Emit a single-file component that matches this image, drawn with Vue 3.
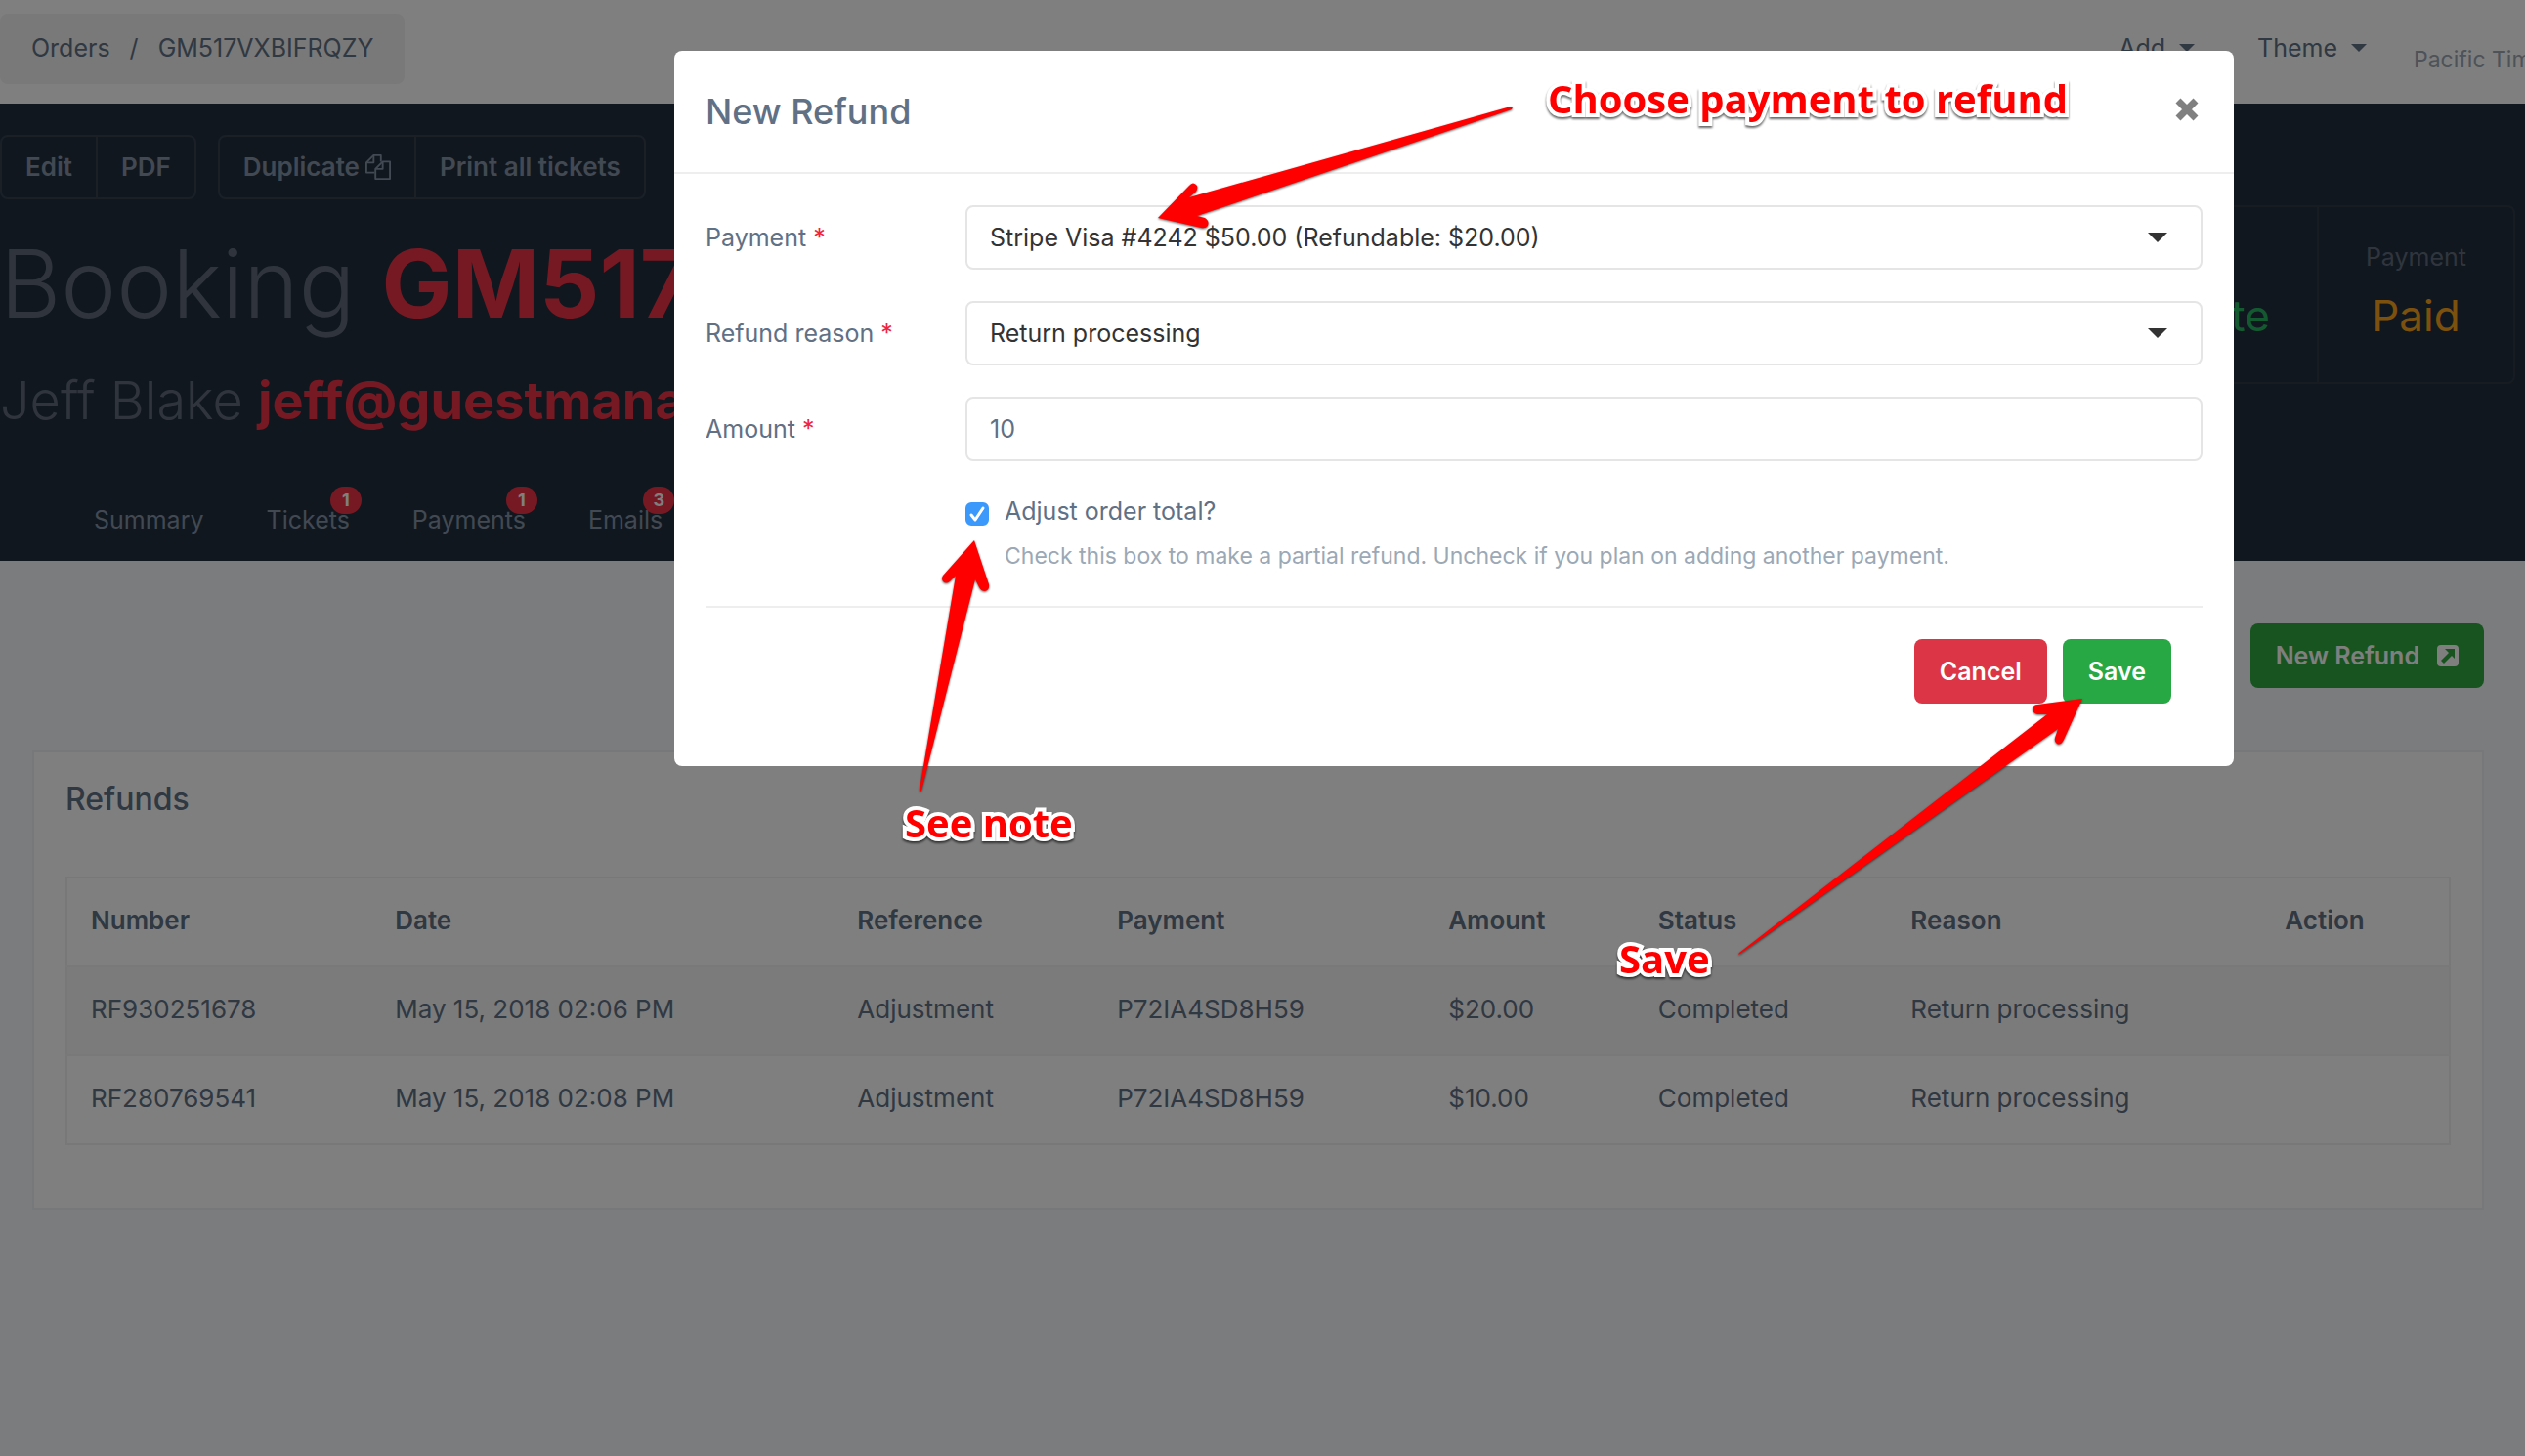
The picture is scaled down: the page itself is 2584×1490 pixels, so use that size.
<script setup>
import { ref } from 'vue'

const tabs = [
  { name: 'Summary' },
  { name: 'Tickets', count: 1 },
  { name: 'Payments', count: 1 },
  { name: 'Emails', count: 3 }
]

const stats = [
  { label: 'Status', value: 'Complete', tone: 'green' },
  { label: 'Payment', value: 'Paid', tone: 'amber' }
]

const columns = [
  { name: 'Number', width: 12.8 },
  { name: 'Date', width: 19.4 },
  { name: 'Reference', width: 10.9 },
  { name: 'Payment', width: 13.9 },
  { name: 'Amount', width: 8.8 },
  { name: 'Status', width: 10.6 },
  { name: 'Reason', width: 15.7 },
  { name: 'Action', width: 7.9 }
]

const refunds = [
  ['RF930251678', 'May 15, 2018 02:06 PM', 'Adjustment', 'P72IA4SD8H59', '$20.00', 'Completed', 'Return processing', ''],
  ['RF280769541', 'May 15, 2018 02:08 PM', 'Adjustment', 'P72IA4SD8H59', '$10.00', 'Completed', 'Return processing', '']
]

const amount = ref('10')
const adjust = ref(true)
</script>

<template>
  <div class="app">
    <header class="topbar">
      <nav class="crumbs" aria-label="Breadcrumb">
        <a href="#">Orders</a>
        <span class="slash">/</span>
        <span>GM517VXBIFRQZY</span>
      </nav>
      <div class="menus">
        <button type="button" class="menu">Add <i class="caret"></i></button>
        <button type="button" class="menu">Theme <i class="caret"></i></button>
        <span class="zone">Pacific Time</span>
      </div>
    </header>

    <section class="hero">
      <div class="hero-row">
        <div class="hero-main">
          <div class="groups">
            <div class="group">
              <button type="button">Edit</button>
              <button type="button">PDF</button>
            </div>
            <div class="group">
              <button type="button">
                Duplicate
                <svg class="copy" viewBox="0 0 28 28" fill="none" stroke="currentColor" stroke-width="2" stroke-linejoin="round">
                  <path d="M10 20H1V9l8-8h8v7" />
                  <path d="M9 1v8H1" />
                  <path d="M11 16l8-8h8v19H11z" />
                  <path d="M19 8v8h-8" />
                </svg>
              </button>
              <button type="button">Print all tickets</button>
            </div>
          </div>
          <h1>Booking <strong>GM517VXBIFRQZY</strong></h1>
          <h2>Jeff Blake <strong>jeff@guestmanager.com</strong></h2>
        </div>
        <dl class="stats">
          <div v-for="s in stats" :key="s.label" class="stat">
            <dt>{{ s.label }}</dt>
            <dd :class="s.tone">{{ s.value }}</dd>
          </div>
        </dl>
      </div>
      <nav class="tabs" aria-label="Booking">
        <a v-for="t in tabs" :key="t.name" href="#">
          {{ t.name }}<span v-if="t.count" class="badge">{{ t.count }}</span>
        </a>
      </nav>
    </section>

    <main class="content">
      <div class="actions">
        <button type="button" class="btn green-btn">
          New Refund
          <svg class="external" viewBox="0 0 22 22">
            <rect width="22" height="22" rx="4" fill="currentColor" />
            <path d="M8 4h10v10l-3-3-8 8-3-3 8-8z" fill="#2ea83f" />
          </svg>
        </button>
      </div>

      <section class="card">
        <h3>Refunds</h3>
        <table>
          <colgroup>
            <col v-for="c in columns" :key="c.name" :style="{ width: c.width + '%' }" />
          </colgroup>
          <thead>
            <tr>
              <th v-for="c in columns" :key="c.name" scope="col">{{ c.name }}</th>
            </tr>
          </thead>
          <tbody>
            <tr v-for="r in refunds" :key="r[0]">
              <td v-for="(cell, i) in r" :key="i">{{ cell }}</td>
            </tr>
          </tbody>
        </table>
      </section>
    </main>

    <div class="overlay">
      <div class="modal" role="dialog" aria-modal="true" aria-labelledby="modal-title">
        <header class="modal-head">
          <h4 id="modal-title">New Refund</h4>
          <button type="button" class="close" aria-label="Close">
            <svg viewBox="0 0 24 24" stroke="currentColor" stroke-width="7"><path d="M3 3l18 18M21 3L3 21" /></svg>
          </button>
        </header>
        <form class="modal-body" @submit.prevent>
          <div class="field">
            <label for="payment">Payment <em>*</em></label>
            <div class="select">
              <select id="payment">
                <option>Stripe Visa #4242 $50.00 (Refundable: $20.00)</option>
              </select>
              <i class="arrow"></i>
            </div>
          </div>
          <div class="field">
            <label for="reason">Refund reason <em>*</em></label>
            <div class="select">
              <select id="reason">
                <option>Return processing</option>
              </select>
              <i class="arrow"></i>
            </div>
          </div>
          <div class="field">
            <label for="amount">Amount <em>*</em></label>
            <input id="amount" v-model="amount" class="text" type="text" />
          </div>
          <div class="check">
            <span class="box">
              <input id="adjust" v-model="adjust" type="checkbox" aria-describedby="adjust-help" />
              <svg v-if="adjust" viewBox="0 0 24 24" fill="none" stroke="#fff" stroke-width="3" stroke-linecap="round" stroke-linejoin="round">
                <path d="M6 13l4 5 8-12" />
              </svg>
            </span>
            <div>
              <label for="adjust">Adjust order total?</label>
              <p id="adjust-help">Check this box to make a partial refund. Uncheck if you plan on adding another payment.</p>
            </div>
          </div>
          <div class="modal-foot">
            <button type="button" class="btn red-btn">Cancel</button>
            <button type="submit" class="btn save-btn">Save</button>
          </div>
        </form>
      </div>
    </div>

    <div class="notes">
      <svg class="arrows" fill="#f00">
        <path d="M1185 223L1217 190Q1221 185 1225 190Q1226 193 1224 196L1217 202L1546 109Q1549 109 1547 112L1225 221L1233 223Q1238 226 1236 231Q1234 234 1229 233Z" />
        <path d="M997 553L1012 598Q1013 604 1008 605Q1004 605 1002 601L998 593L943 809Q941 811 941 808L978 589L972 595Q968 598 965 595Q963 592 965 589Z" />
        <path d="M2131 715L2112 757Q2109 763 2105 761Q2102 759 2103 755L2106 746L1781 976Q1778 978 1780 975L2095 731L2085 731Q2080 730 2080 725Q2081 721 2085 721Z" />
      </svg>
      <p class="note choose">Choose payment to refund</p>
      <p class="note see">See note</p>
      <p class="note save">Save</p>
    </div>
  </div>
</template>

<style>
body {
  background: #f7f9fc;
  overflow: hidden;
}
</style>

<style scoped>
.app {
  position: relative;
  min-height: 100vh;
  overflow: hidden;
  background: #f7f9fc;
  color: #607085;
  font: 26px/38px Inter, "Liberation Sans", sans-serif;
}
.app * {
  box-sizing: border-box;
}
h1, h2, h3, h4, p, dl, dd {
  margin: 0;
}
button, input, select {
  font: inherit;
  color: inherit;
}
a {
  color: inherit;
  text-decoration: none;
}

.topbar {
  display: flex;
  justify-content: space-between;
  padding: 14px 0 20px;
  background: #fff;
}
.crumbs {
  display: flex;
  gap: 20px;
  padding: 16px 32px 18px;
  border-radius: 8px;
  background: #f2f2f2;
  font-size: 25px;
}
.menus {
  display: flex;
  align-items: flex-start;
  padding-top: 16px;
  font-size: 25px;
}
.menu {
  display: flex;
  align-items: center;
  gap: 14px;
  margin-right: 64px;
  padding: 0;
  border: 0;
  background: none;
}
.menu:nth-child(2) {
  margin-right: 48px;
}
.zone {
  flex: none;
  width: 114px;
  padding-top: 12px;
  font-size: 23px;
  white-space: nowrap;
  color: #9ba6b2;
}
.caret {
  border: 8px solid transparent;
  border-top-color: currentColor;
  border-bottom: 0;
}

.hero {
  background: #222f3e;
  padding: 32px 0 23px;
}
.hero-row {
  display: flex;
  justify-content: space-between;
  align-items: flex-start;
}
.groups {
  display: flex;
  gap: 22px;
}
.group {
  display: flex;
  border: 2px solid #36414f;
  border-radius: 8px;
}
.group button {
  display: flex;
  align-items: center;
  gap: 6px;
  padding: 12px 24px;
  border: 0;
  background: none;
  color: #8493a5;
  font-weight: 600;
}
.group button + button {
  border-left: 2px solid #36414f;
}
.copy {
  width: 26px;
  height: 26px;
}
h1, h2 {
  font-weight: 300;
  color: #606b7b;
  white-space: nowrap;
}
.hero strong {
  font-weight: 700;
  color: #ec3347;
}
h1 {
  margin-top: 26px;
  font-size: 96px;
  line-height: 120px;
}
h2 {
  margin-top: 24px;
  font-size: 54px;
  line-height: 72px;
}
.stats {
  display: flex;
  margin: 72px 10px 0 0;
  border: 2px solid #2f3947;
  border-radius: 8px;
}
.stat {
  padding: 32px 48px 34px;
  text-align: center;
}
.stat + .stat {
  border-left: 2px solid #2f3947;
}
.stat dt {
  color: #606b7b;
  font-size: 25px;
}
.stat dd {
  margin-top: 8px;
  font-size: 44px;
  line-height: 67px;
}
.stat .green {
  color: #28b463;
}
.stat .amber {
  color: #f9a11b;
}
.tabs {
  display: flex;
  gap: 64px;
  padding: 67px 96px 0;
  color: #8493a5;
  font-size: 25px;
}
.tabs a {
  position: relative;
}
.badge {
  position: absolute;
  right: -12px;
  top: -15px;
  min-width: 32px;
  border-radius: 14px;
  background: #ec3347;
  color: #fff;
  font-size: 18px;
  font-weight: 700;
  line-height: 28px;
  text-align: center;
}

.content {
  padding: 64px 42px 40px 33px;
}
.actions {
  display: flex;
  justify-content: flex-end;
}
.btn {
  display: flex;
  align-items: center;
  gap: 18px;
  padding: 14px 26px;
  border: 0;
  border-radius: 8px;
  color: #fff;
  font-size: 25px;
  font-weight: 600;
}
.green-btn {
  background: #2ea83f;
}
.external {
  width: 22px;
  height: 22px;
}
.card {
  margin-top: 64px;
  padding: 29px 32px 64px;
  border: 2px solid #eff0f2;
  background: #fff;
}
h3 {
  font-size: 32px;
  line-height: 38px;
  font-weight: 500;
}
table {
  width: 100%;
  margin-top: 60px;
  border: 2px solid #f0f1f2;
  border-collapse: collapse;
  table-layout: fixed;
  text-align: left;
}
th, td {
  padding: 24px 0 27px 24px;
  white-space: nowrap;
}
th {
  font-weight: 600;
}
tbody tr {
  border-top: 2px solid #f3f3f3;
}
tbody tr:nth-child(odd) {
  background: #f7f7f7;
}

.overlay {
  position: absolute;
  inset: 0;
  padding: 52px 298px 0 690px;
  background: rgba(0, 0, 0, 0.5);
}
.modal {
  border-radius: 8px;
  background: #fff;
}
.modal-head {
  display: flex;
  justify-content: space-between;
  padding: 36px;
  padding-left: 32px;
  border-bottom: 2px solid #eee;
}
h4 {
  font-size: 36px;
  line-height: 52px;
  font-weight: 500;
}
.close {
  align-self: flex-start;
  display: flex;
  margin-top: 12px;
  padding: 0;
  border: 0;
  background: none;
  color: #808080;
}
.close svg {
  width: 24px;
  height: 24px;
}
.modal-body {
  padding: 32px 32px 64px;
  font-size: 25px;
}
.field {
  display: grid;
  grid-template-columns: 266px 1fr;
  align-items: center;
  margin-bottom: 32px;
}
.field em {
  color: #f0243c;
  font-style: normal;
}
.select {
  position: relative;
}
select, .text {
  display: block;
  width: 100%;
  height: 66px;
  padding: 0 23px;
  border: 2px solid #e5e5e5;
  border-radius: 8px;
  background: #fff;
  appearance: none;
}
select {
  color: #333;
}
.arrow {
  position: absolute;
  right: 36px;
  top: 28px;
  border: 10px solid transparent;
  border-top-color: #333;
  border-bottom: 0;
}
.check {
  display: flex;
  gap: 16px;
  padding: 0 0 32px 266px;
}
.box {
  position: relative;
  flex: none;
  width: 24px;
  height: 24px;
  margin-top: 10px;
}
.box input {
  display: block;
  width: 100%;
  height: 100%;
  margin: 0;
  border: 2px solid #b5bfca;
  border-radius: 6px;
  appearance: none;
}
.box input:checked {
  border-color: #3b99fc;
  background: #3b99fc;
}
.box svg {
  position: absolute;
  inset: 0;
  pointer-events: none;
}
.check p {
  margin-top: 8px;
  color: #9ba8b5;
  font-size: 23px;
}
.modal-foot {
  display: flex;
  justify-content: flex-end;
  gap: 16px;
  padding: 32px 32px 0 0;
  border-top: 2px solid #eee;
}
.red-btn {
  background: #dc3545;
}
.save-btn {
  background: #28a745;
}

.notes {
  position: absolute;
  inset: 0;
  pointer-events: none;
}
.arrows {
  width: 100%;
  height: 100%;
  filter: drop-shadow(0 1px 1px rgba(0, 0, 0, 0.6));
}
.note {
  position: absolute;
  color: #f00;
  font: 700 40px/54px "Open Sans", "Noto Sans", sans-serif;
  white-space: nowrap;
  -webkit-text-stroke: 8px #fff;
  stroke-linejoin: round;
  paint-order: stroke fill;
  filter: drop-shadow(0 2px 1px rgba(0, 0, 0, 0.6));
}
.choose {
  left: 1584px;
  top: 74px;
}
.see {
  left: 926px;
  top: 815px;
}
.save {
  left: 1657px;
  top: 954px;
}
</style>
